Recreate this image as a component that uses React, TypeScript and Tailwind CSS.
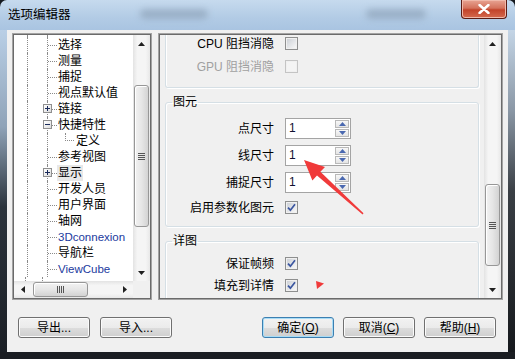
import type { ReactNode } from "react";

type Row = { text: string; box?: "+" | "-"; child?: boolean; blue?: boolean; sel?: boolean };

const rows: Row[] = [
  { text: "选择" },
  { text: "测量" },
  { text: "捕捉" },
  { text: "视点默认值" },
  { text: "链接", box: "+" },
  { text: "快捷特性", box: "-" },
  { text: "定义", child: true },
  { text: "参考视图" },
  { text: "显示", box: "+", sel: true },
  { text: "开发人员" },
  { text: "用户界面" },
  { text: "轴网" },
  { text: "3Dconnexion", blue: true },
  { text: "导航栏" },
  { text: "ViewCube", blue: true },
  { text: "SteeringWheels", blue: true },
];

function Arrow({ dir }: { dir: "up" | "down" | "left" | "right" }) {
  const pts = {
    up: "0,4 7,4 3.5,0",
    down: "0,0 7,0 3.5,4",
    left: "4,0 4,7 0,3.5",
    right: "0,0 0,7 4,3.5",
  }[dir];
  const w = dir === "up" || dir === "down" ? 7 : 4;
  const h = dir === "up" || dir === "down" ? 4 : 7;
  return (
    <svg width={w} height={h} viewBox={`0 0 ${w} ${h}`}>
      <polygon points={pts} fill="#202020" />
    </svg>
  );
}

function VScroll({ gap, thumb }: { gap: number; thumb: number }) {
  return (
    <div className="w-[17px] h-full flex flex-col bg-[linear-gradient(90deg,#e3e3e3,#f5f5f5_25%,#f5f5f5_75%,#e8e8e8)]">
      <div className="h-[17px] flex items-center justify-center">
        <Arrow dir="up" />
      </div>
      <div style={{ height: gap }} />
      <div
        style={{ height: thumb }}
        className="mx-[1px] rounded-[3px] border border-[#979797] bg-[linear-gradient(90deg,#f2f2f2,#e6e6e6_50%,#d3d3d3)] shadow-[inset_1px_1px_0_#fff] flex flex-col items-center justify-center gap-[1px]"
      >
        <div className="w-[7px] h-[1px] bg-[#555]" />
        <div className="w-[7px] h-[1px] bg-[#555]" />
        <div className="w-[7px] h-[1px] bg-[#555]" />
        <div className="w-[7px] h-[1px] bg-[#555]" />
      </div>
      <div className="flex-1" />
      <div className="h-[17px] flex items-center justify-center">
        <Arrow dir="down" />
      </div>
    </div>
  );
}

function Box({ sign }: { sign: "+" | "-" }) {
  return (
    <div className="absolute left-[-5px] top-[3px] w-[9px] h-[9px] border border-[#8f8f8f] bg-[linear-gradient(135deg,#ffffff,#dcdcdc)] flex items-center justify-center">
      <div className="relative w-[5px] h-[5px] flex items-center justify-center">
        <div className="w-[5px] h-[1px] bg-[#1a2a5a]" />
        {sign === "+" && <div className="absolute left-[2px] top-0 w-[1px] h-[5px] bg-[#1a2a5a]" />}
      </div>
    </div>
  );
}

function TreeRow({ row }: { row: Row }) {
  return (
    <div className="h-[16px] flex shrink-0">
      <div className="w-[13px]" />
      <div className="w-[20px] border-l border-dotted border-[#8a8a8a]" />
      <div className="relative w-[11px] border-l border-dotted border-[#8a8a8a] flex items-center">
        {!row.child && <div className="w-[9px] border-t border-dotted border-[#8a8a8a]" />}
        {row.box && <Box sign={row.box} />}
      </div>
      {row.child && (
        <>
          <div className="w-[7px]" />
          <div className="w-[11px]">
            <div className="w-[9px] h-[8px] border-l border-b border-dotted border-[#8a8a8a]" />
          </div>
        </>
      )}
      <span
        className={`whitespace-nowrap leading-[16px] ${row.sel ? "bg-[#e8e8e8] px-[1px] -ml-[1px]" : ""} ${
          row.blue ? "text-[#1b3a9e] text-[11.5px] font-['Liberation_Sans',sans-serif]" : "text-black text-[12px]"
        }`}
      >
        {row.text}
      </span>
    </div>
  );
}

function Check({ on, off }: { on?: boolean; off?: boolean }) {
  return (
    <div
      className={`w-[13px] h-[13px] border p-[1px] ${off ? "border-[#c4c4c4]" : "border-[#8e8f8f]"}`}
    >
      <div
        className={`w-full h-full flex items-center justify-center ${
          off ? "bg-[#f4f4f4]" : "bg-[linear-gradient(135deg,#cdd1d7,#f7f7f7)]"
        }`}
      >
        {on && (
          <svg width="9" height="9" viewBox="0 0 9 9">
            <path d="M1 4.6 L3.4 7.2 L8 1.2" stroke="#3b56a0" strokeWidth="1.7" fill="none" />
          </svg>
        )}
      </div>
    </div>
  );
}

function Spin() {
  return (
    <div className="w-[66px] h-[21px] border border-[#a4a4a4] bg-white p-[1px] flex">
      <span className="flex-1 pl-[2px] leading-[17px] text-[12px] font-['Liberation_Sans',sans-serif] text-[#101030]">1</span>
      <div className="w-[14px] flex flex-col gap-[1px]">
        <div className="flex-1 border border-[#b9b9b9] bg-[linear-gradient(#f8f8f8,#e4e4e4)] flex items-center justify-center">
          <svg width="7" height="4" viewBox="0 0 7 4">
            <polygon points="0,4 7,4 3.5,0" fill="#4a68b0" />
          </svg>
        </div>
        <div className="flex-1 border border-[#b9b9b9] bg-[linear-gradient(#f8f8f8,#e4e4e4)] flex items-center justify-center">
          <svg width="7" height="4" viewBox="0 0 7 4">
            <polygon points="0,0 7,0 3.5,4" fill="#4a68b0" />
          </svg>
        </div>
      </div>
    </div>
  );
}

function Field({ label, children, dim, h = 17, mt }: { label: ReactNode; children: ReactNode; dim?: boolean; h?: number; mt: string }) {
  return (
    <div style={{ height: h }} className={`flex items-center ${mt}`}>
      <div className={`w-[108px] text-right text-[12px] whitespace-nowrap ${dim ? "text-[#a0a0a0]" : "text-black"}`}>{label}</div>
      <div className="ml-[11px]">{children}</div>
    </div>
  );
}

function Btn({ children, focus }: { children: ReactNode; focus?: boolean }) {
  return (
    <div
      className={`w-[72px] h-[21px] rounded-[3px] border flex items-center justify-center text-[12px] text-black bg-[linear-gradient(#f2f2f2_0%,#ebebeb_50%,#dddddd_51%,#cfcfcf_100%)] ${
        focus ? "border-[#3c7fb1] shadow-[inset_0_0_0_1px_#a8dcf6]" : "border-[#707070] shadow-[inset_0_0_0_1px_#fbfbfb]"
      }`}
    >
      {children}
    </div>
  );
}

export default function App() {
  return (
    <div className="relative w-[515px] h-[359px] overflow-hidden bg-[#15191e] flex flex-col font-['Liberation_Sans','Noto_Sans_CJK_SC',sans-serif]">
      {/* title bar */}
      <div className="relative h-[30px] shrink-0 flex items-start rounded-t-[7px] bg-[linear-gradient(#c6daee,#b2cbe5_60%,#a9c4e1)]">
        <span className="ml-[8px] mt-[6px] text-[12.5px] text-black">选项编辑器</span>
        <div className="absolute left-[140px] top-[9px] w-[68px] h-[10px] rounded-full bg-[#7f93aa]/50 blur-[3px]" />
        <div className="absolute left-[366px] top-[9px] w-[60px] h-[10px] rounded-full bg-[#7f93aa]/50 blur-[3px]" />
        <div className="flex-1" />
        <div className="mr-[8px] w-[46px] h-[19px] rounded-b-[4px] border border-t-0 border-[#5b1c14] bg-[linear-gradient(#e8a493,#d4725c_45%,#c2432a_55%,#d56a4e)] flex items-center justify-center shadow-[inset_0_0_0_1px_#f0b9aa]">
          <svg width="12" height="10" viewBox="0 0 12 10">
            <path d="M1.5 1 L10.5 9 M10.5 1 L1.5 9" stroke="#fff" strokeWidth="2.4" strokeLinecap="round" />
            <path d="M1.5 1 L10.5 9 M10.5 1 L1.5 9" stroke="#fff" strokeWidth="1.6" />
          </svg>
        </div>
      </div>

      <div className="flex h-[322px] shrink-0">
        <div className="w-[7px] bg-[linear-gradient(#b9cfe6,#8fa3b8_30%,#2b333c_55%,#1b1f25)]" />

        {/* client */}
        <div className="w-[501px] bg-[#f0f0f0] flex flex-col pt-[3px] px-[5px]">
          <div className="flex gap-[6px] h-[267px]">
            {/* tree */}
            <div className="w-[140px] h-full border border-[#a3a3a3]">
              <div className="h-full border border-[#6b6b6b] bg-white flex flex-col">
                <div className="flex h-[246px]">
                  <div className="flex-1 overflow-hidden flex flex-col">
                    <div className="h-[2px] flex shrink-0">
                      <div className="w-[13px]" />
                      <div className="w-[20px] border-l border-dotted border-[#8a8a8a]" />
                      <div className="w-[11px] border-l border-dotted border-[#8a8a8a]" />
                    </div>
                    {rows.map((r) => (
                      <TreeRow key={r.text} row={r} />
                    ))}
                  </div>
                  <VScroll gap={33} thumb={142} />
                </div>
                <div className="flex h-[17px]">
                  <div className="flex-1 flex bg-[linear-gradient(#e3e3e3,#f5f5f5_25%,#f5f5f5_75%,#e8e8e8)]">
                    <div className="w-[17px] flex items-center justify-center">
                      <Arrow dir="left" />
                    </div>
                    <div className="w-[2px]" />
                    <div className="w-[55px] my-[1px] rounded-[3px] border border-[#979797] bg-[linear-gradient(#f2f2f2,#e6e6e6_50%,#d3d3d3)] shadow-[inset_1px_1px_0_#fff] flex items-center justify-center gap-[1px]">
                      <div className="w-[1px] h-[7px] bg-[#555]" />
                      <div className="w-[1px] h-[7px] bg-[#555]" />
                      <div className="w-[1px] h-[7px] bg-[#555]" />
                      <div className="w-[1px] h-[7px] bg-[#555]" />
                    </div>
                    <div className="flex-1" />
                    <div className="w-[17px] flex items-center justify-center">
                      <Arrow dir="right" />
                    </div>
                  </div>
                  <div className="w-[17px] bg-[#f0f0f0]" />
                </div>
              </div>
            </div>

            {/* options panel */}
            <div className="w-[345px] h-full border border-[#a3a3a3]">
              <div className="h-full border border-[#6b6b6b] flex">
                <div className="flex-1 overflow-hidden bg-[#f0f0f0] pl-[5px] pr-[5px] flex flex-col">
                  <div className="h-[53px] shrink-0 border-x border-b border-[#d5dfe5] rounded-b-[3px] shadow-[inset_1px_0_0_#fff,1px_1px_0_#fff] flex flex-col">
                    <Field mt="" label={<>CPU 阻挡消隐</>}>
                      <Check />
                    </Field>
                    <Field mt="mt-[6px]" dim label={<>GPU 阻挡消隐</>}>
                      <Check off />
                    </Field>
                  </div>

                  <fieldset className="mt-[6px] shrink-0 border border-[#d5dfe5] rounded-[3px] shadow-[inset_1px_1px_0_#fff,1px_1px_0_#fff] pb-[10px]">
                    <legend className="ml-[6px] px-[1px] leading-[16px] text-[12px] text-black">图元</legend>
                    <Field mt="mt-[8px]" h={21} label="点尺寸">
                      <Spin />
                    </Field>
                    <Field mt="mt-[6px]" h={21} label="线尺寸">
                      <Spin />
                    </Field>
                    <Field mt="mt-[6px]" h={21} label="捕捉尺寸">
                      <Spin />
                    </Field>
                    <Field mt="mt-[6px]" label="启用参数化图元">
                      <Check on />
                    </Field>
                  </fieldset>

                  <fieldset className="mt-[6px] shrink-0 border border-[#d5dfe5] rounded-[3px] shadow-[inset_1px_1px_0_#fff,1px_1px_0_#fff] pb-[20px]">
                    <legend className="ml-[6px] px-[1px] leading-[16px] text-[12px] text-black">详图</legend>
                    <Field mt="mt-[6px]" label="保证帧频">
                      <Check on />
                    </Field>
                    <Field mt="mt-[5px]" label="填充到详情">
                      <Check on />
                    </Field>
                  </fieldset>
                </div>
                <VScroll gap={132} thumb={82} />
              </div>
            </div>
          </div>

          {/* buttons */}
          <div className="mt-[17px] flex pl-[6px] pr-[7px]">
            <Btn>导出...</Btn>
            <div className="w-[10px]" />
            <Btn>导入...</Btn>
            <div className="flex-1" />
            <Btn focus>
              <span>
                确定(<span className="underline">O</span>)
              </span>
            </Btn>
            <div className="w-[9px]" />
            <Btn>
              <span>
                取消(<span className="underline">C</span>)
              </span>
            </Btn>
            <div className="w-[9px]" />
            <Btn>
              <span>
                帮助(<span className="underline">H</span>)
              </span>
            </Btn>
          </div>
        </div>

        <div className="w-[7px] bg-[linear-gradient(#c4d5e6,#8a97a5_25%,#3a3f45_50%,#16191d)]" />
      </div>

      <div className="h-[7px] bg-[#1a1d22]" />

      {/* annotation arrows */}
      <svg className="absolute left-0 top-0 pointer-events-none" width="515" height="359" viewBox="0 0 515 359">
        <polygon
          points="304,160 325,167 320.4,171.8 363.5,213.3 362.6,214.4 317,175.4 312.4,180.5"
          fill="#f03a3a"
        />
        <polygon points="316,281 324,283.5 317,289" fill="#f03a3a" />
      </svg>
    </div>
  );
}
